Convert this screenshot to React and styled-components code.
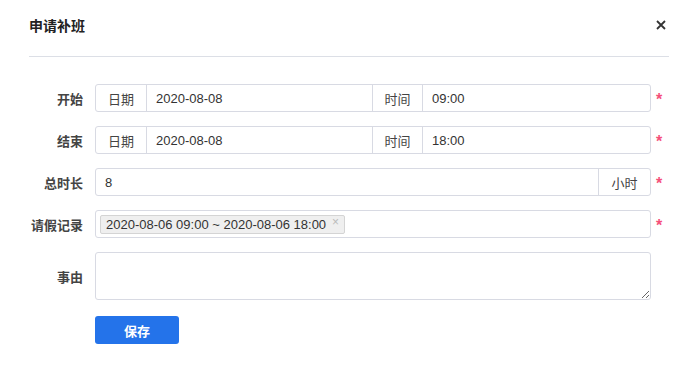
import React from "react";
import styled, { createGlobalStyle } from "styled-components";

const GlobalStyle = createGlobalStyle`
  body {
    margin: 0;
    background: #fff;
    font-family: "Liberation Sans", "Noto Sans CJK SC", sans-serif;
    color: #333;
  }
`;

const Dialog = styled.div`
  width: 693px;
  height: 367px;
  padding: 0 24px 0 29px;
  box-sizing: border-box;
`;

const Header = styled.div`
  display: flex;
  align-items: center;
  justify-content: space-between;
  height: 57px;
  padding-bottom: 6px;
  border-bottom: 1px solid #dcdfe6;
  box-sizing: border-box;
`;

const Title = styled.div`
  font-size: 14px;
  font-weight: bold;
  color: #222;
  font-family: "Noto Sans CJK SC", sans-serif;
`;

const Close = styled.button`
  border: none;
  background: none;
  padding: 0;
  margin-right: 2px;
  width: 12px;
  height: 12px;
  display: flex;
  align-items: center;
  justify-content: center;
  cursor: pointer;
`;

const Form = styled.div`
  display: flex;
  flex-direction: column;
  gap: 14px;
  padding-top: 27px;
`;

const Row = styled.div`
  display: flex;
  align-items: center;
`;

const Label = styled.div`
  width: 54px;
  margin-right: 12px;
  text-align: right;
  font-size: 13px;
  font-weight: bold;
  color: #444;
  font-family: "Noto Sans CJK SC", sans-serif;
  flex-shrink: 0;
`;

const Group = styled.div`
  flex: 1;
  display: flex;
  height: 28px;
  border: 1px solid #d8dae3;
  border-radius: 3px;
  box-sizing: border-box;
  overflow: hidden;
`;

const Addon = styled.div`
  width: ${({ $w }) => $w}px;
  flex-shrink: 0;
  display: flex;
  align-items: center;
  justify-content: center;
  font-size: 13px;
  color: #444;
  font-family: "Noto Sans CJK SC", sans-serif;
  border-left: ${({ $left }) => ($left ? "1px solid #d8dae3" : "none")};
  border-right: ${({ $right }) => ($right ? "1px solid #d8dae3" : "none")};
  box-sizing: border-box;
`;

const Field = styled.input`
  flex: ${({ $w }) => ($w ? "none" : "1")};
  width: ${({ $w }) => ($w ? `${$w}px` : "auto")};
  min-width: 0;
  border: none;
  outline: none;
  padding: 0 9px;
  font-size: 13px;
  font-family: "Liberation Sans", "Noto Sans CJK SC", sans-serif;
  color: #333;
  background: transparent;
  box-sizing: border-box;
`;

const Star = styled.span`
  width: 18px;
  flex-shrink: 0;
  padding-left: 5px;
  padding-top: 4px;
  box-sizing: border-box;
  color: #f5507a;
  font-size: 16px;
  font-weight: bold;
  line-height: 1;
  font-family: "Liberation Sans", sans-serif;
`;

const TagBox = styled.div`
  flex: 1;
  height: 28px;
  border: 1px solid #d8dae3;
  border-radius: 3px;
  box-sizing: border-box;
  display: flex;
  align-items: center;
  padding-left: 4px;
`;

const Tag = styled.span`
  display: inline-flex;
  align-items: center;
  height: 19px;
  padding: 0 5px;
  background: #efefef;
  border: 1px solid #d4d4d4;
  border-radius: 2px;
  box-sizing: border-box;
  font-size: 13px;
  color: #333;
  gap: 6px;
`;

const TagX = styled.span`
  color: #bbb;
  font-size: 12px;
  line-height: 1;
  margin-top: -4px;
`;

const Area = styled.textarea`
  flex: 1;
  height: 48px;
  border: 1px solid #d8dae3;
  border-radius: 3px;
  box-sizing: border-box;
  outline: none;
  resize: vertical;
  margin-right: 18px;
  font-family: inherit;
`;

const Actions = styled.div`
  padding-left: 66px;
  padding-top: 2px;
`;

const Save = styled.button`
  width: 84px;
  height: 28px;
  border: none;
  border-radius: 3px;
  background: #2473ea;
  color: #fff;
  font-size: 13px;
  font-weight: bold;
  font-family: "Noto Sans CJK SC", sans-serif;
  cursor: pointer;
`;

const DateRow = ({ label, date, time }) => (
  <Row>
    <Label>{label}</Label>
    <Group>
      <Addon $w={51} $right>日期</Addon>
      <Field $w={225} defaultValue={date} />
      <Addon $w={51} $left $right>时间</Addon>
      <Field defaultValue={time} />
    </Group>
    <Star>*</Star>
  </Row>
);

export default function App() {
  return (
    <>
      <GlobalStyle />
      <Dialog>
        <Header>
          <Title>申请补班</Title>
          <Close>
            <svg width="10" height="10" viewBox="0 0 10 10">
              <path d="M1 1L9 9M9 1L1 9" stroke="#333" strokeWidth="1.8" />
            </svg>
          </Close>
        </Header>
        <Form>
          <DateRow label="开始" date="2020-08-08" time="09:00" />
          <DateRow label="结束" date="2020-08-08" time="18:00" />
          <Row>
            <Label>总时长</Label>
            <Group>
              <Field defaultValue="8" />
              <Addon $w={52} $left>小时</Addon>
            </Group>
            <Star>*</Star>
          </Row>
          <Row>
            <Label>请假记录</Label>
            <TagBox>
              <Tag>
                2020-08-06 09:00 ~ 2020-08-06 18:00
                <TagX>×</TagX>
              </Tag>
            </TagBox>
            <Star>*</Star>
          </Row>
          <Row>
            <Label>事由</Label>
            <Area />
          </Row>
          <Actions>
            <Save>保存</Save>
          </Actions>
        </Form>
      </Dialog>
    </>
  );
}
